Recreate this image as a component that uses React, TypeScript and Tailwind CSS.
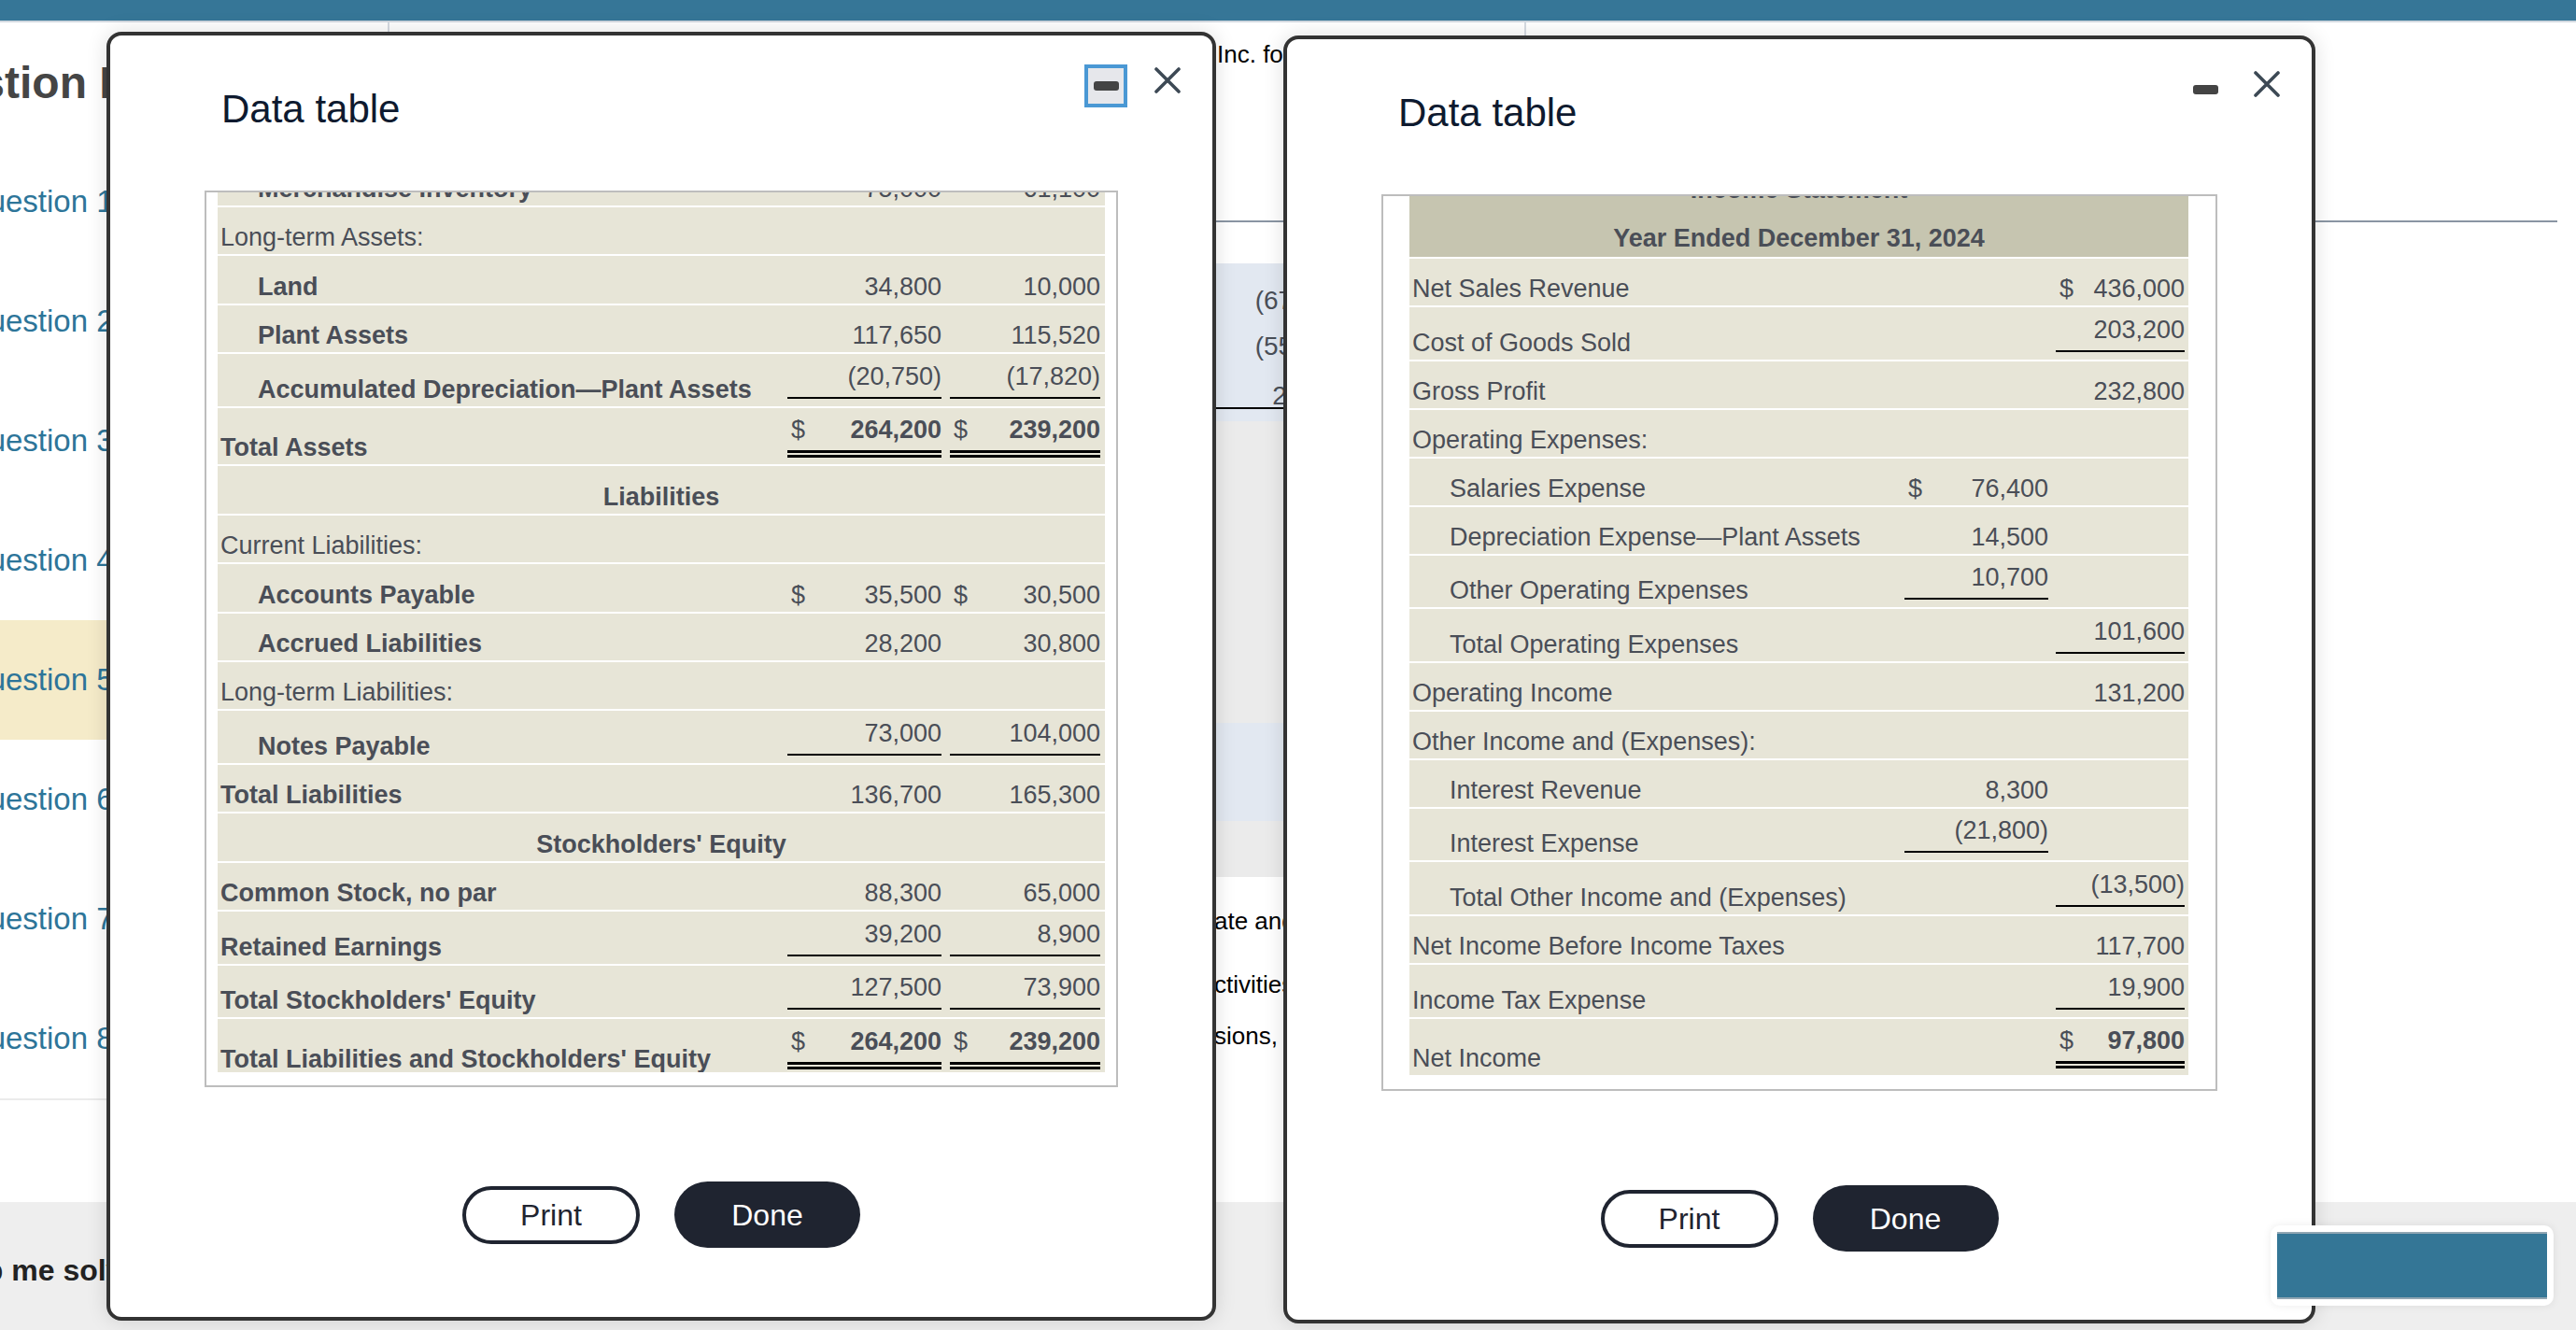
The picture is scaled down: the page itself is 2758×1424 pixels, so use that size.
import React from "react";
import clsx from "clsx";

type Amount = {
  v: string;
  dollar?: boolean;
  bold?: boolean;
  line?: "single" | "double";
};

type Row = {
  label: string;
  kind?: "line" | "section" | "head";
  indent?: boolean;
  bold?: boolean;
  sep?: boolean;
  a?: Amount;
  b?: Amount;
};

const balanceRows: Row[] = [
  { label: "Merchandise Inventory", indent: true, bold: true, a: { v: "75,000" }, b: { v: "61,100" } },
  { label: "Long-term Assets:" },
  { label: "Land", indent: true, bold: true, a: { v: "34,800" }, b: { v: "10,000" } },
  { label: "Plant Assets", indent: true, bold: true, a: { v: "117,650" }, b: { v: "115,520" } },
  {
    label: "Accumulated Depreciation—Plant Assets",
    indent: true,
    bold: true,
    a: { v: "(20,750)", line: "single" },
    b: { v: "(17,820)", line: "single" },
  },
  {
    label: "Total Assets",
    bold: true,
    a: { v: "264,200", dollar: true, bold: true, line: "double" },
    b: { v: "239,200", dollar: true, bold: true, line: "double" },
  },
  { label: "Liabilities", kind: "section" },
  { label: "Current Liabilities:" },
  {
    label: "Accounts Payable",
    indent: true,
    bold: true,
    a: { v: "35,500", dollar: true },
    b: { v: "30,500", dollar: true },
  },
  { label: "Accrued Liabilities", indent: true, bold: true, a: { v: "28,200" }, b: { v: "30,800" } },
  { label: "Long-term Liabilities:" },
  {
    label: "Notes Payable",
    indent: true,
    bold: true,
    a: { v: "73,000", line: "single" },
    b: { v: "104,000", line: "single" },
  },
  { label: "Total Liabilities", bold: true, a: { v: "136,700" }, b: { v: "165,300" } },
  { label: "Stockholders' Equity", kind: "section" },
  { label: "Common Stock, no par", bold: true, a: { v: "88,300" }, b: { v: "65,000" } },
  {
    label: "Retained Earnings",
    bold: true,
    a: { v: "39,200", line: "single" },
    b: { v: "8,900", line: "single" },
  },
  {
    label: "Total Stockholders' Equity",
    bold: true,
    a: { v: "127,500", line: "single" },
    b: { v: "73,900", line: "single" },
  },
  {
    label: "Total Liabilities and Stockholders' Equity",
    bold: true,
    a: { v: "264,200", dollar: true, bold: true, line: "double" },
    b: { v: "239,200", dollar: true, bold: true, line: "double" },
  },
];

const incomeRows: Row[] = [
  { label: "Income Statement", kind: "head" },
  { label: "Year Ended December 31, 2024", kind: "head", sep: true },
  { label: "Net Sales Revenue", b: { v: "436,000", dollar: true } },
  { label: "Cost of Goods Sold", b: { v: "203,200", line: "single" } },
  { label: "Gross Profit", b: { v: "232,800" } },
  { label: "Operating Expenses:" },
  { label: "Salaries Expense", indent: true, a: { v: "76,400", dollar: true } },
  { label: "Depreciation Expense—Plant Assets", indent: true, a: { v: "14,500" } },
  { label: "Other Operating Expenses", indent: true, a: { v: "10,700", line: "single" } },
  { label: "Total Operating Expenses", indent: true, b: { v: "101,600", line: "single" } },
  { label: "Operating Income", b: { v: "131,200" } },
  { label: "Other Income and (Expenses):" },
  { label: "Interest Revenue", indent: true, a: { v: "8,300" } },
  { label: "Interest Expense", indent: true, a: { v: "(21,800)", line: "single" } },
  { label: "Total Other Income and (Expenses)", indent: true, b: { v: "(13,500)", line: "single" } },
  { label: "Net Income Before Income Taxes", b: { v: "117,700" } },
  { label: "Income Tax Expense", b: { v: "19,900", line: "single" } },
  { label: "Net Income", b: { v: "97,800", dollar: true, bold: true, line: "double" } },
];

const questions = [1, 2, 3, 4, 5, 6, 7, 8];

function AmountCell({ cell, pad, rowPad }: { cell?: Amount; pad: string; rowPad: string }) {
  if (!cell) return <div />;
  return (
    <div className={clsx(pad, cell.line ? "pt-[7.6px]" : clsx("pb-[2px]", rowPad))}>
      <div
        className={clsx(
          "flex justify-between leading-[32px]",
          cell.line === "single" && "mb-[8px] border-b-2 border-black pb-[6px]",
          cell.line === "double" && "mb-[7px] border-b-[8px] border-double border-black pb-[6px]"
        )}
      >
        <span className="ml-[4px]">{cell.dollar ? "$" : ""}</span>
        <span className={clsx(cell.bold && "font-bold")}>{cell.v}</span>
      </div>
    </div>
  );
}

function TableRow({
  row,
  cols,
  padA,
  padB,
  rowPad,
}: {
  row: Row;
  cols: string;
  padA: string;
  padB: string;
  rowPad: string;
}) {
  if (row.kind === "section") {
    return (
      <div className={clsx("border-b-2 border-white bg-[#e7e5d7] pb-[2px] text-center font-bold leading-[32px]", rowPad)}>
        {row.label}
      </div>
    );
  }
  if (row.kind === "head") {
    return (
      <div
        className={clsx(
          "bg-[#c6c5b0] pb-[4.4px] pt-[15.6px] text-center font-bold leading-[32px]",
          row.sep && "border-b-2 border-white"
        )}
      >
        {row.label}
      </div>
    );
  }
  return (
    <div className={clsx("grid items-end border-b-2 border-white bg-[#e7e5d7]", cols)}>
      <div
        className={clsx(
          "whitespace-nowrap pb-[2px] leading-[32px]",
          rowPad,
          row.indent ? "pl-[43px]" : "pl-[3px]",
          row.bold && "font-bold"
        )}
      >
        {row.label}
      </div>
      <AmountCell cell={row.a} pad={padA} rowPad={rowPad} />
      <AmountCell cell={row.b} pad={padB} rowPad={rowPad} />
    </div>
  );
}

function DataModal({
  className,
  active,
  children,
}: {
  className: string;
  active?: boolean;
  children: React.ReactNode;
}) {
  return (
    <div
      className={clsx(
        "absolute flex flex-col rounded-[16px] border-4 border-[#333333] bg-white shadow-[0_0_22px_rgba(0,0,0,0.13)]",
        className
      )}
    >
      {/* Title bar */}
      <div className="flex items-start justify-between">
        <h2 className="pl-[119px] pt-[55px] text-[42px] leading-[48px] text-[#0e1a2f]">Data table</h2>
        <div className="flex items-start gap-[29px] pr-[34px] pt-[31px]">
          <button
            className={clsx(
              "flex h-[46px] w-[46px] items-center justify-center",
              active && "border-4 border-[#4a98d4] bg-[#e6e7eb]"
            )}
          >
            <span className="h-[10px] w-[27px] rounded-[3px] bg-[#444444]" />
          </button>
          <svg className="mt-[3px] h-[28px] w-[28px]" viewBox="0 0 28 28" fill="none">
            <path d="M2 2L26 26M26 2L2 26" stroke="#3d4955" strokeWidth="3.6" strokeLinecap="round" />
          </svg>
        </div>
      </div>

      {children}

      {/* Footer buttons */}
      <div className="mt-[101px] flex items-center justify-center gap-[37px]">
        <button className="h-[62px] w-[190px] rounded-full border-4 border-[#1f2430] bg-white text-[32px] text-[#1f2430]">
          Print
        </button>
        <button className="h-[71px] w-[199px] rounded-full bg-[#1f2430] text-[32px] text-white">Done</button>
      </div>
    </div>
  );
}

export default function App() {
  return (
    <div className="relative h-[1424px] w-full overflow-hidden bg-white font-['Liberation_Sans',Arial,sans-serif]">
      {/* Page behind the dialogs */}
      <div className="flex h-full flex-col">
        <div className="h-[22px] shrink-0 bg-[#367697]" />
        <div className="h-[2px] shrink-0 bg-[#d3d9e0]" />

        <div className="flex min-h-0 flex-1">
          <aside className="w-[417px] shrink-0 overflow-hidden border-r-2 border-[#d6dbe2]">
            <div className="h-[128px] pt-[37px]">
              <p className="-ml-[115px] whitespace-nowrap text-[48px] font-bold leading-[56px] text-[#454545]">
                Question List
              </p>
            </div>
            <ul className="border-b-2 border-[#ebebeb]">
              {questions.map((n) => (
                <li
                  key={n}
                  className={clsx("flex h-[128px] items-center", n === 5 && "bg-[#f5ebc9]")}
                >
                  <span className="-ml-[38px] whitespace-nowrap text-[33px] leading-[40px] text-[#2d7599]">
                    Question {n}
                  </span>
                </li>
              ))}
            </ul>
          </aside>

          <main className="min-w-0 flex-1 pl-[40px] pr-[20px] text-black">
            <div className="h-[214px] border-b-2 border-[#8a95a3]">
              <div className="flex h-[14px]">
                <div className="w-[1175px]" />
                <div className="w-[2px] bg-[#d6dbe2]" />
              </div>
              <p className="mt-[5px] flex whitespace-nowrap text-[26px] leading-[30px]">
                <span className="inline-block w-[846px] overflow-hidden text-right">
                  The comparative financial statements of Delta Sales,&nbsp;
                </span>
                <span>Inc. for 2024 and 2023 follow. Use the data tables to answer the questions.</span>
              </p>
            </div>

            <div className="mt-[44px] w-[1700px] text-[28px] text-[#4a4f58]">
              <div className="bg-[#e2e8f1] pb-[13px] pt-[16px]">
                <div className="grid grid-cols-[831px_160px]">
                  <div />
                  <div className="h-[48px] text-right leading-[48px]">(67,000)</div>
                </div>
                <div className="grid grid-cols-[831px_160px]">
                  <div />
                  <div className="h-[49px] text-right leading-[49px]">(55,000)</div>
                </div>
                <div className="grid grid-cols-[831px_160px]">
                  <div />
                  <div className="flex h-[43px] items-end justify-end border-b-2 border-black leading-[24px]">
                    25,000
                  </div>
                </div>
              </div>
              <div className="h-[323px] bg-[#ebebeb]" />
              <div className="h-[105px] bg-[#e2e8f1]" />
              <div className="h-[60px] bg-[#ebebeb]" />
            </div>

            <div className="text-[26px] leading-[30px]">
              <p className="mt-[32px] flex whitespace-nowrap">
                <span className="inline-block w-[843px] overflow-hidden text-right">Requirement 1. Calcul</span>
                <span>ate and prepare the statement of cash flows for the year.</span>
              </p>
              <p className="mt-[38px] flex whitespace-nowrap">
                <span className="inline-block w-[843px] overflow-hidden text-right">
                  Show operating, investing and financing a
                </span>
                <span>ctivities separately.</span>
              </p>
              <p className="mt-[25px] flex whitespace-nowrap">
                <span className="inline-block w-[843px] overflow-hidden text-right">Round all divi</span>
                <span>sions, and use parentheses for outflows.</span>
              </p>
            </div>
          </main>
        </div>

        <footer className="flex h-[137px] shrink-0 items-center bg-[#eeeeee] pt-[8px]">
          <span className="-ml-[66px] whitespace-nowrap text-[32px] font-bold text-[#222222]">Help me solve this</span>
        </footer>
      </div>

      {/* Balance sheet dialog */}
      <DataModal className="left-[114px] top-[34px] h-[1380px] w-[1188px]" active>
        <div className="mx-[101px] mt-[63px] h-[960px] border-2 border-[#bdbdbd] px-[12px] pb-[14px] text-[27px] text-[#4a4e57]">
          <div className="h-full overflow-hidden">
            <div className="-mt-[36.4px]">
              {balanceRows.map((row) => (
                <TableRow
                  key={row.label}
                  row={row}
                  cols="grid-cols-[1fr_174px_171px]"
                  padA="pl-[5px] pr-[4px]"
                  padB="pl-[5px] pr-[5px]"
                  rowPad="pt-[16.4px]"
                />
              ))}
            </div>
          </div>
        </div>
      </DataModal>

      {/* Income statement dialog */}
      <DataModal className="left-[1374px] top-[38px] h-[1379px] w-[1105px]">
        <div className="mx-[101px] mt-[63px] h-[960px] border-2 border-[#bdbdbd] pb-[13px] pl-[28px] pr-[29px] text-[27px] text-[#4a4e57]">
          <div className="h-full overflow-hidden">
            <div className="-mt-[39px]">
              {incomeRows.map((row) => (
                <TableRow
                  key={row.label}
                  row={row}
                  cols="grid-cols-[1fr_162px_146px]"
                  padA="px-[4px]"
                  padB="px-[4px]"
                  rowPad="pt-[16px]"
                />
              ))}
            </div>
          </div>
        </div>
      </DataModal>

      {/* Floating action button */}
      <div className="absolute left-[2431px] top-[1312px] rounded-[10px] bg-white p-[7px] shadow-[0_0_10px_rgba(0,0,0,0.08)]">
        <button className="block h-[72px] w-[289px] border-y-2 border-[#91a6b3] bg-[#347696]" />
      </div>
    </div>
  );
}
